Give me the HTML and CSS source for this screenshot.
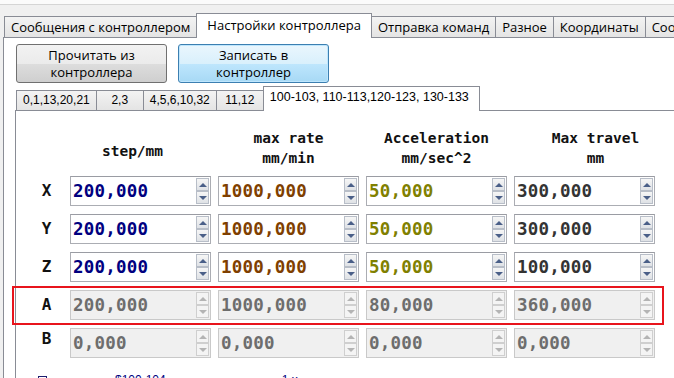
FILE: index.html
```html
<!DOCTYPE html>
<html lang="ru">
  <head>
    <meta charset="UTF-8" />
    <title>Настройки контроллера</title>
    <link rel="stylesheet" href="styles.css">
  </head>
  <body>
    <div class="top-strip"></div>

    <!-- main tabs -->
    <div class="main-tabs">
      <div class="tab">Сообщения с контроллером</div>
      <div class="tab active">Настройки контроллера</div>
      <div class="tab">Отправка команд</div>
      <div class="tab">Разное</div>
      <div class="tab">Координаты</div>
      <div class="tab">Сообщения</div>
    </div>

    <div class="page">
      <div class="buttons">
        <button class="btn">Прочитать из<br />контроллера</button>
        <button class="btn default">Записать в<br />контроллер</button>
      </div>

      <div class="sub-tabs">
        <div class="sub-tab">0,1,13,20,21</div>
        <div class="sub-tab">2,3</div>
        <div class="sub-tab">4,5,6,10,32</div>
        <div class="sub-tab">11,12</div>
        <div class="sub-tab active">100-103, 110-113,120-123, 130-133</div>
      </div>

      <div class="sub-page">
        <div class="axes">
          <div></div>
          <div class="head head-step">step/mm</div>
          <div class="head">max rate<br />mm/min</div>
          <div class="head">Acceleration<br />mm/sec^2</div>
          <div class="head head-travel">Max travel<br />mm</div>

          <div class="axis">X</div>
          <div class="num c1"><span>200,000</span><div class="spin"><i class="up"></i><i class="down"></i></div></div>
          <div class="num c2"><span>1000,000</span><div class="spin"><i class="up"></i><i class="down"></i></div></div>
          <div class="num c3"><span>50,000</span><div class="spin"><i class="up"></i><i class="down"></i></div></div>
          <div class="num c4"><span>300,000</span><div class="spin"><i class="up"></i><i class="down"></i></div></div>

          <div class="axis">Y</div>
          <div class="num c1"><span>200,000</span><div class="spin"><i class="up"></i><i class="down"></i></div></div>
          <div class="num c2"><span>1000,000</span><div class="spin"><i class="up"></i><i class="down"></i></div></div>
          <div class="num c3"><span>50,000</span><div class="spin"><i class="up"></i><i class="down"></i></div></div>
          <div class="num c4"><span>300,000</span><div class="spin"><i class="up"></i><i class="down"></i></div></div>

          <div class="axis">Z</div>
          <div class="num c1"><span>200,000</span><div class="spin"><i class="up"></i><i class="down"></i></div></div>
          <div class="num c2"><span>1000,000</span><div class="spin"><i class="up"></i><i class="down"></i></div></div>
          <div class="num c3"><span>50,000</span><div class="spin"><i class="up"></i><i class="down"></i></div></div>
          <div class="num c4"><span>100,000</span><div class="spin"><i class="up"></i><i class="down"></i></div></div>

          <div class="axis">A</div>
          <div class="num disabled"><span>200,000</span><div class="spin"><i class="up"></i><i class="down"></i></div></div>
          <div class="num disabled"><span>1000,000</span><div class="spin"><i class="up"></i><i class="down"></i></div></div>
          <div class="num disabled"><span>80,000</span><div class="spin"><i class="up"></i><i class="down"></i></div></div>
          <div class="num disabled"><span>360,000</span><div class="spin"><i class="up"></i><i class="down"></i></div></div>

          <div class="axis axis-b">B</div>
          <div class="num disabled"><span>0,000</span><div class="spin"><i class="up"></i><i class="down"></i></div></div>
          <div class="num disabled"><span>0,000</span><div class="spin"><i class="up"></i><i class="down"></i></div></div>
          <div class="num disabled"><span>0,000</span><div class="spin"><i class="up"></i><i class="down"></i></div></div>
          <div class="num disabled"><span>0,000</span><div class="spin"><i class="up"></i><i class="down"></i></div></div>
        </div>

        <div class="bottom-row">
          <span class="check"></span>
          <span class="param">$100-104</span>
          <span class="mult">1 x</span>
          <span class="dot">.</span>
        </div>
      </div>
    </div>

    <!-- red frame around the A axis row -->
    <div class="highlight"></div>
  </body>
</html>
```

FILE: styles.css
```css
body {
  margin: 0;
  width: 674px;
  height: 378px;
  overflow: hidden;
  background-color: #f0f0f0;
  font-family: "Liberation Sans", Arial, sans-serif;
  color: #000;
}
.top-strip {
  height: 4px;
  background: #fbfbfb;
  border-bottom: 1px solid #d5d5d5;
}

/* main tab strip */
.main-tabs {
  display: flex;
  align-items: flex-end;
  height: 32px;
  padding-left: 4px;
}
.tab {
  box-sizing: border-box;
  height: 21px;
  line-height: 20px;
  padding: 0 6px;
  font-family: "Open Sans", sans-serif;
  font-size: 13px;
  white-space: nowrap;
  border: 1px solid #898c95;
  border-bottom: none;
  background: linear-gradient(#f3f3f3, #e4e4e4);
  margin-right: -1px;
}
.tab.active {
  position: relative;
  z-index: 1;
  height: 25px;
  line-height: 22px;
  padding: 0 10px;
  margin-bottom: -1px;
  background: #fff;
}

.page {
  margin-left: 3px;
  width: 700px;
  height: 360px;
  background: #fff;
  border: 1px solid #898c95;
  padding: 6px 0 0 11px;
}
.buttons {
  display: flex;
  gap: 11px;
  margin-left: 1px;
}
.btn {
  width: 151px;
  height: 39px;
  padding: 0;
  font-family: "Open Sans", sans-serif;
  font-size: 13px;
  line-height: 17px;
  color: #000;
  border: 1px solid #707070;
  border-radius: 3px;
  background: linear-gradient(#f2f2f2 0%, #ebebeb 50%, #dddddd 51%, #cfcfcf 100%);
}
.btn.default {
  border-color: #3c7fb1;
  box-shadow: inset 0 0 0 1px #bee6fd;
  background: linear-gradient(#eaf6fd 0%, #d9f0fc 50%, #bee6fd 51%, #a7d9f5 100%);
}

/* parameter group tabs */
.sub-tabs {
  display: flex;
  align-items: flex-end;
  height: 24px;
  margin-top: 3px;
  padding-left: 1px;
}
.sub-tab {
  box-sizing: border-box;
  min-width: 48px;
  height: 20px;
  line-height: 19px;
  padding: 0 6px;
  text-align: center;
  font-size: 12px;
  white-space: nowrap;
  border: 1px solid #898c95;
  border-bottom: none;
  background: linear-gradient(#f3f3f3, #e4e4e4);
  margin-right: -1px;
}
.sub-tab.active {
  position: relative;
  z-index: 1;
  height: 25px;
  line-height: 20px;
  padding: 0 10px 0 6px;
  margin-bottom: -1px;
  font-size: 12.5px;
  background: #fff;
}
.sub-page {
  height: 300px;
  background: #fff;
  border: 1px solid #898c95;
  padding-top: 17px;
}

/* axis settings grid */
.axes {
  display: grid;
  grid-template-columns: 47px repeat(4, 141px);
  column-gap: 7px;
  row-gap: 8px;
  grid-template-rows: 40px;
  grid-auto-rows: 30px;
}
.head {
  font-family: "DejaVu Sans Mono", monospace;
  font-weight: bold;
  font-size: 14.5px;
  line-height: 20px;
  text-align: center;
  color: #111;
}
.head-step {
  padding: 13px 16px 0 0;
}
.head-travel {
  padding-left: 22px;
}
.axis {
  font-family: "DejaVu Sans Mono", monospace;
  font-weight: bold;
  font-size: 16px;
  line-height: 30px;
  text-align: center;
  padding-left: 14px;
  color: #111;
}
.axis-b {
  line-height: 22px;
}
.num {
  box-sizing: border-box;
  display: flex;
  align-items: center;
  height: 30px;
  border: 1px solid #abadb3;
  border-top-color: #9a9ca3;
  background: #fff;
  padding: 0 1px 0 2px;
}
.num span {
  flex: 1;
  font-family: "DejaVu Sans Mono", monospace;
  font-weight: bold;
  font-size: 17.5px;
  letter-spacing: 0.2px;
}
.c1 span { color: #00007f; }
.c2 span { color: #7f3f00; }
.c3 span { color: #808000; }
.c4 span { color: #333333; }

.spin {
  display: flex;
  flex-direction: column;
  width: 13px;
  height: 26px;
}
.spin i {
  box-sizing: border-box;
  flex: 1;
  display: flex;
  align-items: center;
  justify-content: center;
  border: 1px solid #b8bec8;
  background: linear-gradient(#f6f6f6, #dfe2e6);
}
.spin i::after {
  content: "";
  border-left: 4px solid transparent;
  border-right: 4px solid transparent;
}
.spin .up::after {
  border-bottom: 4px solid #4a5f88;
}
.spin .down::after {
  border-top: 4px solid #4a5f88;
}

.num.disabled {
  background: #f0f0f0;
  border-color: #c9c9c9;
}
.num.disabled span {
  color: #6d6d6d;
}
.num.disabled .spin i {
  background: #f4f4f4;
  border-color: #cfcfcf;
}
.num.disabled .spin .up::after {
  border-bottom-color: #b4b4b4;
}
.num.disabled .spin .down::after {
  border-top-color: #b4b4b4;
}

.bottom-row {
  display: flex;
  align-items: center;
  height: 14px;
  margin-top: 15px;
  font-size: 12px;
  color: #00007f;
}
.check {
  width: 7px;
  height: 7px;
  border: 1px solid #1c1c6e;
  margin-left: 22px;
}
.param {
  margin-left: 68px;
}
.mult {
  margin-left: 116px;
}
.dot {
  margin-left: 280px;
}

.highlight {
  position: absolute;
  left: 12px;
  top: 286px;
  width: 652px;
  height: 39px;
  box-sizing: border-box;
  border: 2px solid #e8141c;
}
```
